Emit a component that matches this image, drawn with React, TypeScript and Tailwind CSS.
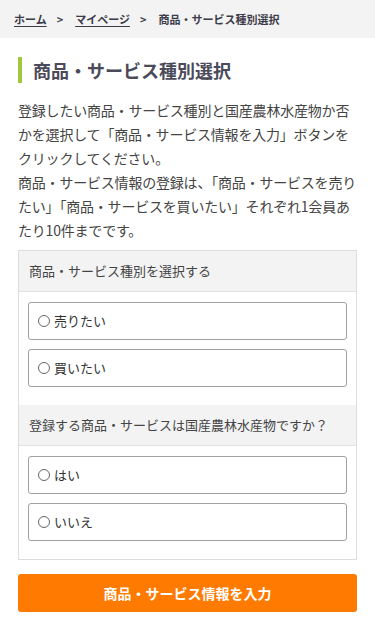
const FONT = "font-['Noto_Sans_CJK_JP','Noto_Sans',sans-serif]";

const SECTIONS = [
  { title: "商品・サービス種別を選択する", options: ["売りたい", "買いたい"] },
  { title: "登録する商品・サービスは国産農林水産物ですか？", options: ["はい", "いいえ"] },
];

function Option({ label }: { label: string }) {
  return (
    <label className="flex h-[38px] items-center rounded-[3px] border border-[#a0a0a0] bg-white pl-[9px] text-[13px] text-[#333]">
      <span className="mr-[4px] h-[12px] w-[12px] rounded-full border border-[#666]" />
      {label}
    </label>
  );
}

export default function App() {
  return (
    <div className={`min-h-[628px] bg-white ${FONT}`}>
      <nav className="flex h-[38px] items-center bg-[#f3f3f4] px-[14px] text-[11px] font-bold text-[#3c3c48]">
        <a className="underline underline-offset-2">ホーム</a>
        <span className="ml-[10px] mr-[12px]">&gt;</span>
        <a className="underline underline-offset-2">マイページ</a>
        <span className="ml-[10px] mr-[12px]">&gt;</span>
        <span>商品・サービス種別選択</span>
      </nav>

      <main className="px-[18px]">
        <h1 className="mt-[19px] flex h-[26px] items-center border-l-4 border-[#9fc83d] pl-[11px] text-[18px] font-bold text-[#4a4a5a]">
          商品・サービス種別選択
        </h1>

        <p className="mt-[15px] text-[14px] leading-[24px] tracking-[-0.2px] text-[#444]">
          登録したい商品・サービス種別と国産農林水産物か否かを選択して「商品・サービス情報を入力」ボタンをクリックしてください。
          <br />
          商品・サービス情報の登録は、「商品・サービスを売りたい」「商品・サービスを買いたい」それぞれ1会員あたり10件までです。
        </p>

        <div className="mt-[8px] border border-[#dddddd]">
          {SECTIONS.map((s) => (
            <div key={s.title}>
              <div className="flex h-[41px] items-center border-b border-[#e2e2e2] bg-[#f3f3f4] px-[10px] text-[13px] text-[#444]">
                {s.title}
              </div>
              <div className="flex flex-col gap-[9px] px-[9px] pt-[10px] pb-[18px]">
                {s.options.map((o) => (
                  <Option key={o} label={o} />
                ))}
              </div>
            </div>
          ))}
        </div>

        <button className="mt-[14px] flex h-[38px] w-full items-center justify-center rounded-[3px] bg-[#ff7a00] text-[14px] font-bold text-white">
          商品・サービス情報を入力
        </button>
      </main>
    </div>
  );
}
